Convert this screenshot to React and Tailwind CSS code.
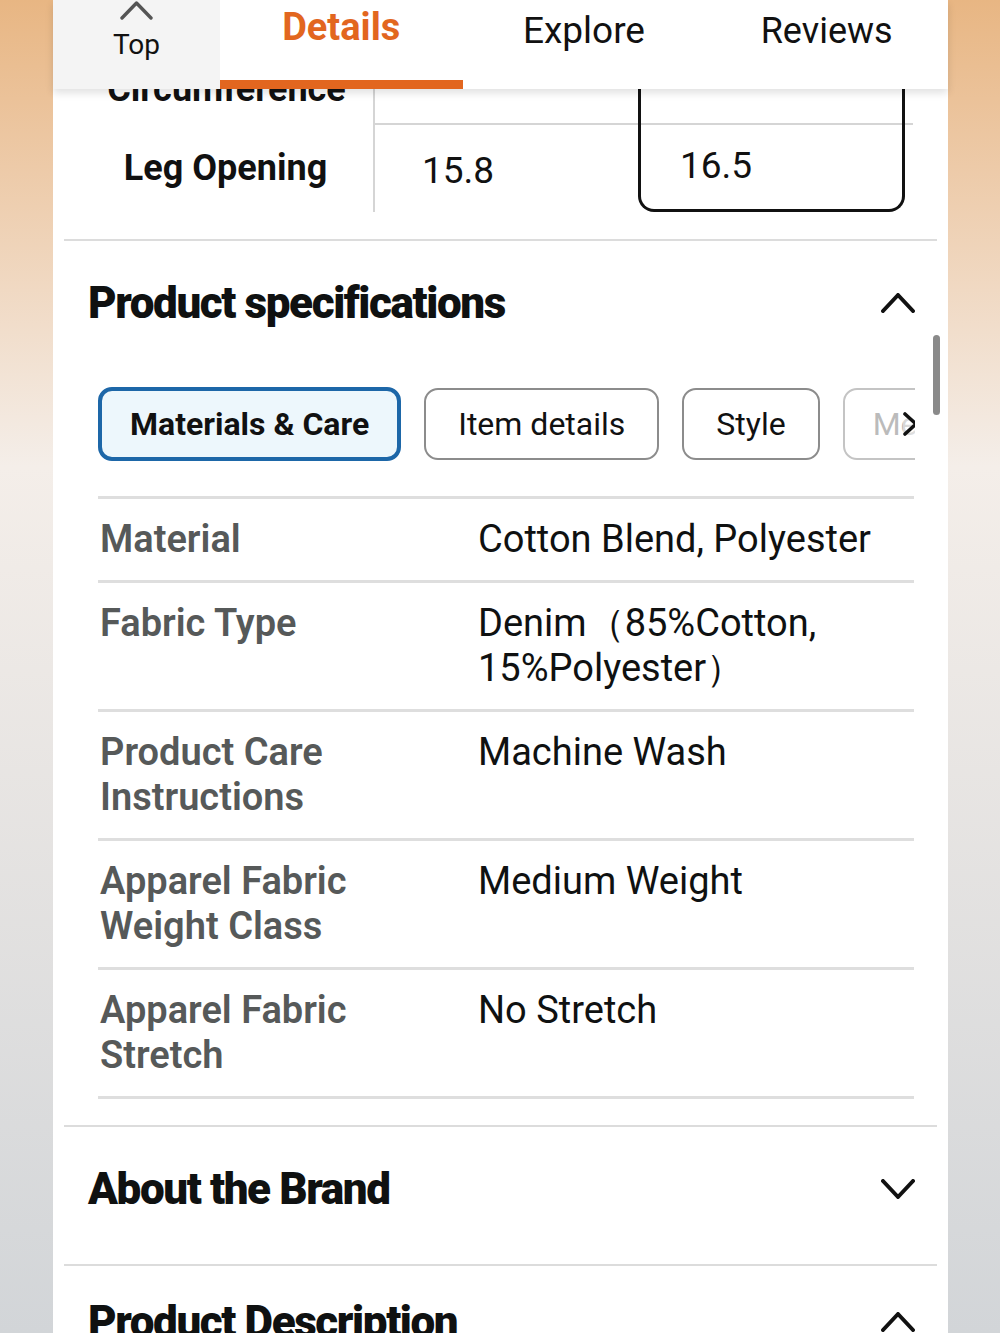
import React from 'react';

const specs = [
  { label: ['Material'], value: ['Cotton Blend, Polyester'] },
  { label: ['Fabric Type'], value: ['Denim（85%Cotton,', '15%Polyester）'] },
  { label: ['Product Care', 'Instructions'], value: ['Machine Wash'] },
  { label: ['Apparel Fabric', 'Weight Class'], value: ['Medium Weight'] },
  { label: ['Apparel Fabric', 'Stretch'], value: ['No Stretch'] },
];

const chips = [
  { text: 'Item details', pad: 'px-[32px]' },
  { text: 'Style', pad: 'px-[32px]' },
];

// simple chevron drawn to match the wide, flat glyph in the reference
function Chevron({ dir = 'up', className = '', width = 34, height = 20, stroke = 4, color = '#111' }) {
  const pts = dir === 'up'
    ? `2,${height - 2} ${width / 2},2 ${width - 2},${height - 2}`
    : dir === 'down'
      ? `2,2 ${width / 2},${height - 2} ${width - 2},2`
      : `2,2 ${width - 2},${height / 2} 2,${height - 2}`;
  return (
    <svg width={width} height={height} viewBox={`0 0 ${width} ${height}`} className={className}>
      <polyline points={pts} fill="none" stroke={color} strokeWidth={stroke} strokeLinecap="round" strokeLinejoin="round" />
    </svg>
  );
}

function NavBar() {
  return (
    <div className="absolute top-0 left-0 right-0 h-[89px] bg-white flex shadow-[0_4px_8px_rgba(0,0,0,0.12)] z-10">
      <div className="w-[167px] bg-[#f4f4f4] flex flex-col items-center">
        <Chevron dir="up" width={33} height={19} stroke={3.4} color="#555" className="mt-[1px]" />
        <span className="text-[28px] leading-[34px] text-[#111] mt-[8px]">Top</span>
      </div>
      <div className="w-[243px] relative flex justify-center">
        <span className="text-[38px] font-bold text-[#e2661f] mt-[4px] leading-[46px]">Details</span>
        <div className="absolute bottom-0 left-0 right-0 h-[9px] bg-[#e2661f]" />
      </div>
      <div className="w-[243px] flex justify-center">
        <span className="text-[37px] text-[#111] mt-[8px] leading-[46px]">Explore</span>
      </div>
      <div className="w-[243px] flex justify-center">
        <span className="text-[36px] text-[#111] mt-[8px] leading-[46px]">Reviews</span>
      </div>
    </div>
  );
}

function SizeTable() {
  return (
    <div className="flex flex-col">
      <div className="flex h-[123px]">
        <div className="w-[311px] border-r-2 border-[#d5d5d5] flex items-end justify-center pl-[16px] pb-[14px]">
          <span className="text-[36px] font-bold text-[#111] leading-[40px]">Circumference</span>
        </div>
        <div className="w-[263px]" />
        <div className="w-[267px] border-x-[3px] border-[#111]" />
      </div>
      <div className="flex h-[89px]">
        <div className="w-[311px] border-r-2 border-[#d5d5d5] flex items-center justify-center pl-[14px]">
          <span className="text-[36px] font-bold text-[#111] leading-[40px]">Leg Opening</span>
        </div>
        <div className="w-[263px] border-t-2 border-[#d5d5d5] flex items-center pl-[47px] pt-[4px]">
          <span className="text-[37px] text-[#111]">15.8</span>
        </div>
        <div className="w-[267px] relative border-x-[3px] border-b-[3px] border-[#111] rounded-b-[16px] flex items-center pl-[39px]">
          <div className="absolute top-0 left-0 right-0 h-[2px] bg-[#d5d5d5]" />
          <span className="text-[37px] text-[#111]">16.5</span>
        </div>
        <div className="w-[8px] border-t-2 border-[#d5d5d5]" />
      </div>
    </div>
  );
}

function SectionHeader({ title, open }) {
  return (
    <div className="flex items-center justify-between pl-[24px] pr-[22px]">
      <h2 className="text-[44px] font-black text-[#0f1111] tracking-[-0.032em] leading-[52px] [font-family:Roboto,sans-serif]">
        {title}
      </h2>
      <Chevron dir={open ? 'up' : 'down'} />
    </div>
  );
}

export default function App() {
  return (
    <div className="w-[1000px] h-[1333px] overflow-hidden bg-linear-to-b from-[#e8b683] via-[#f4eee9] via-35% to-[#d2d5d8] [font-family:Roboto,'Liberation_Sans',sans-serif]">
      <div className="relative ml-[53px] w-[895px] h-[1333px] bg-white">
        <NavBar />
        <div className="absolute right-[8px] top-[335px] w-[7px] h-[80px] rounded-full bg-[#8a8a8a]" />

        <div className="flex flex-col px-[11px]">
          <SizeTable />
          <div className="h-[2px] bg-[#dcdcdc] mt-[27px]" />

          <div className="pt-[36px]">
            <SectionHeader title="Product specifications" open />
          </div>

          <div className="flex items-center gap-[23px] pl-[34px] mt-[58px] h-[74px] overflow-hidden w-[851px]">
            <div className="shrink-0 h-[74px] px-[28px] rounded-[14px] border-[4px] border-[#1d67a8] bg-[#edf7fc] flex items-center">
              <span className="text-[32px] font-bold text-[#111]">Materials &amp; Care</span>
            </div>
            {chips.map((c) => (
              <div key={c.text} className={`shrink-0 h-[72px] ${c.pad} rounded-[14px] border-2 border-[#8c8c8c] flex items-center`}>
                <span className="text-[32px] text-[#111]">{c.text}</span>
              </div>
            ))}
            <div className="shrink-0 relative h-[72px] w-[110px] rounded-[14px] border-2 border-[#c4c4c4] flex items-center pl-[28px]">
              <span className="text-[32px] text-[#bbb]">Me</span>
              <div className="absolute top-0 bottom-0 left-[58px] right-0 bg-linear-to-r from-white/40 to-white" />
              <Chevron dir="right" width={15} height={24} stroke={3.6} className="absolute left-[58px] top-[22px]" />
            </div>
          </div>

          <div className="ml-[34px] mr-[23px] mt-[35px] border-t-[3px] border-[#dedede]">
            {specs.map((s) => (
              <div key={s.label[0] + s.label.length} className="flex py-[18px] border-b-[3px] border-[#dedede]">
                <div className="w-[380px] pl-[2px] text-[38px] leading-[45px] font-semibold text-[#565959]">
                  {s.label.map((l) => (
                    <div key={l}>{l}</div>
                  ))}
                </div>
                <div className="flex-1 text-[38px] leading-[45px] text-[#0f1111]">
                  {s.value.map((v) => (
                    <div key={v}>{v}</div>
                  ))}
                </div>
              </div>
            ))}
          </div>

          <div className="h-[2px] bg-[#dcdcdc] mt-[26px]" />
          <div className="h-[137px] pt-[36px]">
            <SectionHeader title="About the Brand" />
          </div>
          <div className="h-[2px] bg-[#dcdcdc]" />
          <div className="pt-[30px]">
            <SectionHeader title="Product Description" open />
          </div>
        </div>
      </div>
    </div>
  );
}
